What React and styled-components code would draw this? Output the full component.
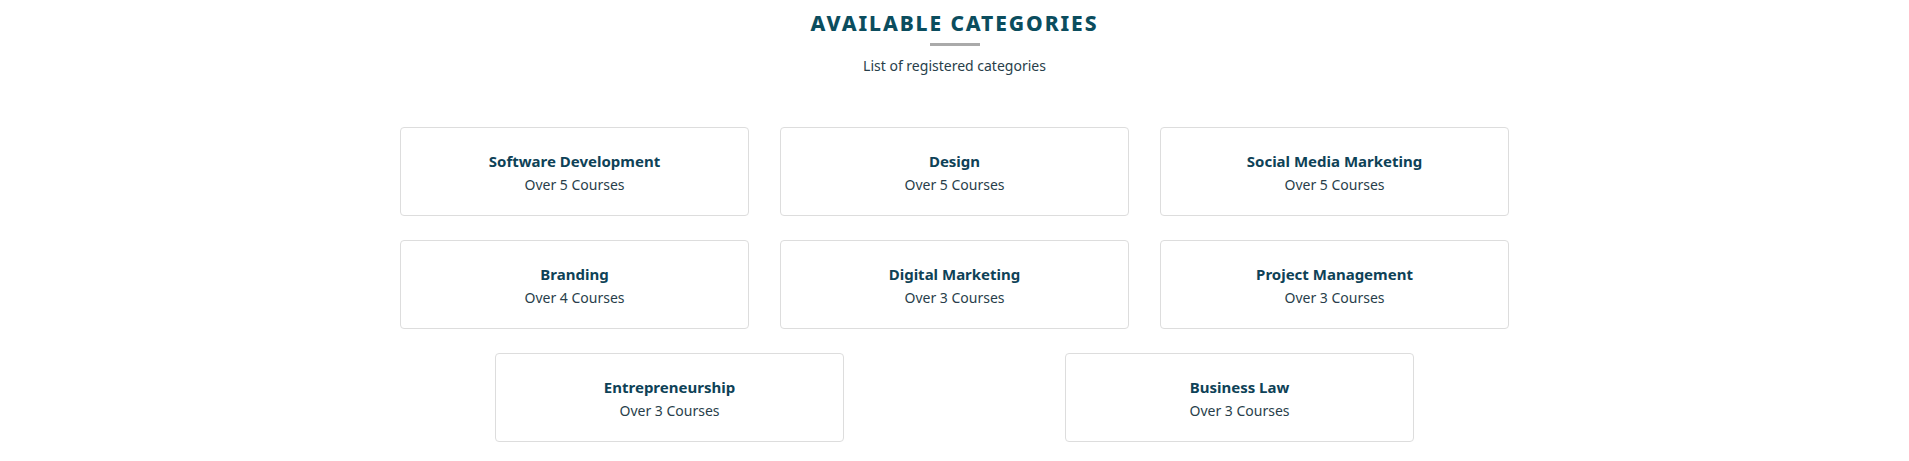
import styled, { createGlobalStyle } from 'styled-components';

const GlobalStyle = createGlobalStyle`
  body {
    margin: 0;
    background: #fff;
    font-family: 'Noto Sans', 'Open Sans', sans-serif;
  }
`;

const colors = {
  teal: '#0b4d5e',
  cardTitle: '#0e4257',
  text: '#283e4a',
  border: '#dddddd',
  bar: '#aaaaaa',
};

const Section = styled.section`
  display: flex;
  flex-direction: column;
  align-items: center;
  padding: 11px 0 20px;
`;

const Heading = styled.h2`
  margin: 0;
  font-size: 21px;
  line-height: 25px;
  font-weight: 800;
  letter-spacing: 1.9px;
  color: ${colors.teal};
  text-transform: uppercase;
`;

const Bar = styled.span`
  display: block;
  width: 50px;
  height: 3px;
  margin-top: 7px;
  background: ${colors.bar};
`;

const Subtitle = styled.p`
  margin: 11px 0 0;
  font-size: 14px;
  line-height: 18px;
  color: ${colors.text};
`;

const Grid = styled.div`
  display: flex;
  flex-direction: column;
  gap: 24px;
  margin-top: 52px;
`;

const Row = styled.div`
  display: flex;
  justify-content: center;
`;

const Cell = styled.div`
  width: ${(p) => p.$width}px;
  display: flex;
  justify-content: center;
`;

const Card = styled.div`
  width: 349px;
  height: 89px;
  box-sizing: border-box;
  border: 1px solid ${colors.border};
  border-radius: 4px;
  display: flex;
  flex-direction: column;
  align-items: center;
  justify-content: center;
  padding-top: 2px;
`;

const CardTitle = styled.h3`
  margin: 0;
  font-size: 15px;
  line-height: 21px;
  font-weight: 700;
  color: ${colors.cardTitle};
`;

const CardCount = styled.p`
  margin: 3px 0 0;
  font-size: 14px;
  line-height: 20px;
  color: ${colors.text};
`;

const rows = [
  [
    { name: 'Software Development', count: 5 },
    { name: 'Design', count: 5 },
    { name: 'Social Media Marketing', count: 5 },
  ],
  [
    { name: 'Branding', count: 4 },
    { name: 'Digital Marketing', count: 3 },
    { name: 'Project Management', count: 3 },
  ],
  [
    { name: 'Entrepreneurship', count: 3 },
    { name: 'Business Law', count: 3 },
  ],
];

const App = () => {
  return (
    <>
      <GlobalStyle />
      <Section>
        <Heading>Available Categories</Heading>
        <Bar />
        <Subtitle>List of registered categories</Subtitle>
        <Grid>
          {rows.map((row, i) => (
            <Row key={i}>
              {row.map((cat) => (
                <Cell key={cat.name} $width={row.length === 3 ? 380 : 570}>
                  <Card>
                    <CardTitle>{cat.name}</CardTitle>
                    <CardCount>Over {cat.count} Courses</CardCount>
                  </Card>
                </Cell>
              ))}
            </Row>
          ))}
        </Grid>
      </Section>
    </>
  );
};

export default App;
